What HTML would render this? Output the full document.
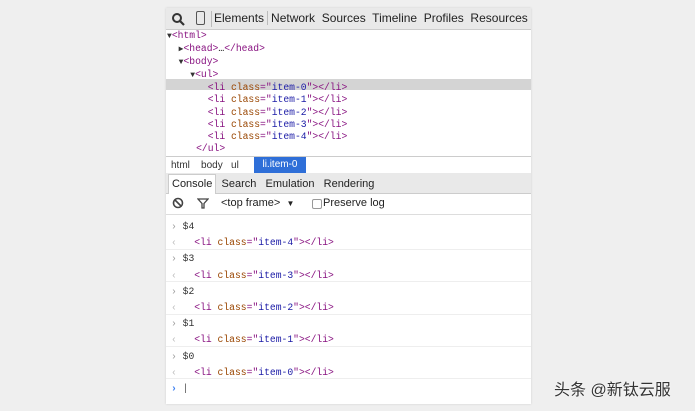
<!DOCTYPE html><html><head><style>
body{margin:0;width:695px;height:411px;background:#efefef;position:relative;overflow:hidden;font-family:"Liberation Sans",sans-serif}
.p{position:absolute;left:166px;top:8px;width:365px;height:396px;background:#fff;box-shadow:0 0 2px #ccc}
.a{position:absolute;white-space:nowrap}
.m{font-family:"Liberation Mono",monospace;font-size:9.7px}
.t{color:#881280}.at{color:#994500}.v{color:#1a1aa6}
.tb{position:absolute;left:0;width:365px}
.sep{position:absolute;left:0;width:365px;height:1px;background:#eee}
.tr{font-size:8px;color:#333}
</style></head><body>
<div class="p">
<div class="tb" style="top:0;height:21px;background:#e9e9e9;border-bottom:1px solid #ccc"></div>
<svg class="a" style="left:5px;top:4px" width="14" height="14"><circle cx="6" cy="6" r="4" fill="none" stroke="#333" stroke-width="2"/><path d="M9 9l4 4" stroke="#333" stroke-width="2.2"/></svg>
<div class="a" style="left:30px;top:3px;width:7px;height:12px;border:1.5px solid #555;border-radius:2px"></div>
<div class="a" style="left:45px;top:3px;height:16px;border-left:1px solid #bbb"></div>
<div class="a" style="left:48px;top:3px;font-size:12px;color:#222;word-spacing:0">Elements<span style="border-left:1px solid #bbb;margin:0 3px"></span>Network&nbsp; Sources&nbsp; Timeline&nbsp; Profiles&nbsp; Resources</div>
<div class="tb" style="top:71px;height:11px;background:#d4d4d4"></div>
<div class="a m" style="left:1px;top:22px;line-height:12.1px">
<div><span class="tr">▼</span><span class="t">&lt;html&gt;</span></div>
<div>&nbsp;&nbsp;<span class="tr">▶</span><span class="t">&lt;head&gt;</span>…<span class="t">&lt;/head&gt;</span></div>
<div>&nbsp;&nbsp;<span class="tr">▼</span><span class="t">&lt;body&gt;</span></div>
<div>&nbsp;&nbsp;&nbsp;&nbsp;<span class="tr">▼</span><span class="t">&lt;ul&gt;</span></div>
<div>&nbsp;&nbsp;&nbsp;&nbsp;&nbsp;&nbsp;&nbsp;<span class="t">&lt;li </span><span class="at">class</span><span class="t">="</span><span class="v">item-0</span><span class="t">"&gt;&lt;/li&gt;</span></div>
<div>&nbsp;&nbsp;&nbsp;&nbsp;&nbsp;&nbsp;&nbsp;<span class="t">&lt;li </span><span class="at">class</span><span class="t">="</span><span class="v">item-1</span><span class="t">"&gt;&lt;/li&gt;</span></div>
<div>&nbsp;&nbsp;&nbsp;&nbsp;&nbsp;&nbsp;&nbsp;<span class="t">&lt;li </span><span class="at">class</span><span class="t">="</span><span class="v">item-2</span><span class="t">"&gt;&lt;/li&gt;</span></div>
<div>&nbsp;&nbsp;&nbsp;&nbsp;&nbsp;&nbsp;&nbsp;<span class="t">&lt;li </span><span class="at">class</span><span class="t">="</span><span class="v">item-3</span><span class="t">"&gt;&lt;/li&gt;</span></div>
<div>&nbsp;&nbsp;&nbsp;&nbsp;&nbsp;&nbsp;&nbsp;<span class="t">&lt;li </span><span class="at">class</span><span class="t">="</span><span class="v">item-4</span><span class="t">"&gt;&lt;/li&gt;</span></div>
<div>&nbsp;&nbsp;&nbsp;&nbsp;&nbsp;<span class="t">&lt;/ul&gt;</span></div>
</div>
<div class="tb" style="top:148px;height:16px;background:#fff;border-top:1px solid #ccc;border-bottom:1px solid #ccc"></div>
<div class="a" style="left:5px;top:152px;font-size:10px;color:#333">html&nbsp;&nbsp;&nbsp; body&nbsp;&nbsp; ul</div>
<div class="a" style="left:88px;top:149px;width:52px;height:16px;background:#2f6fd8;color:#fff;font-size:10px;line-height:16px;text-align:center">li.item-0</div>
<div class="tb" style="top:165px;height:20px;background:#e9e9e9;border-bottom:1px solid #ccc"></div>
<div class="a" style="left:2px;top:166px;width:46px;height:19px;background:#fff;border:1px solid #ccc;border-bottom:none"></div>
<div class="a" style="left:6px;top:170px;font-size:11px;color:#222">Console&nbsp;&nbsp; Search&nbsp;&nbsp; Emulation&nbsp;&nbsp; Rendering</div>
<div class="tb" style="top:186px;height:20px;border-bottom:1px solid #ddd"></div>
<svg class="a" style="left:6px;top:189px" width="12" height="12"><circle cx="6" cy="6" r="4.5" fill="none" stroke="#444" stroke-width="1.6"/><path d="M3 3l6 6" stroke="#444" stroke-width="1.6"/></svg>
<svg class="a" style="left:31px;top:190px" width="12" height="11"><path d="M1 1h10L7 5.5V10H5V5.5z" fill="none" stroke="#444" stroke-width="1.3"/></svg>
<div class="a" style="left:55px;top:189px;font-size:11px;color:#222">&lt;top frame&gt;&nbsp; <span style="font-size:8px">▼</span></div>
<div class="a" style="left:146px;top:191px;width:8px;height:8px;border:1px solid #999;border-radius:2px"></div>
<div class="a" style="left:157px;top:189px;font-size:11px;color:#222">Preserve log</div>
<div class="a m" style="left:5px;top:211px;line-height:16.2px">
<div><span style="color:#999">›</span> <span style="color:#333">$4</span></div>
<div><span style="color:#bbb">‹</span>&nbsp;&nbsp; <span class="t">&lt;li </span><span class="at">class</span><span class="t">="</span><span class="v">item-4</span><span class="t">"&gt;&lt;/li&gt;</span></div>
<div><span style="color:#999">›</span> <span style="color:#333">$3</span></div>
<div><span style="color:#bbb">‹</span>&nbsp;&nbsp; <span class="t">&lt;li </span><span class="at">class</span><span class="t">="</span><span class="v">item-3</span><span class="t">"&gt;&lt;/li&gt;</span></div>
<div><span style="color:#999">›</span> <span style="color:#333">$2</span></div>
<div><span style="color:#bbb">‹</span>&nbsp;&nbsp; <span class="t">&lt;li </span><span class="at">class</span><span class="t">="</span><span class="v">item-2</span><span class="t">"&gt;&lt;/li&gt;</span></div>
<div><span style="color:#999">›</span> <span style="color:#333">$1</span></div>
<div><span style="color:#bbb">‹</span>&nbsp;&nbsp; <span class="t">&lt;li </span><span class="at">class</span><span class="t">="</span><span class="v">item-1</span><span class="t">"&gt;&lt;/li&gt;</span></div>
<div><span style="color:#999">›</span> <span style="color:#333">$0</span></div>
<div><span style="color:#bbb">‹</span>&nbsp;&nbsp; <span class="t">&lt;li </span><span class="at">class</span><span class="t">="</span><span class="v">item-0</span><span class="t">"&gt;&lt;/li&gt;</span></div>
<div><span style="color:#367cf1;font-weight:bold">›</span> <span style="color:#555">|</span></div>
</div>
<div class="sep" style="top:241px"></div><div class="sep" style="top:273px"></div><div class="sep" style="top:306px"></div><div class="sep" style="top:338px"></div><div class="sep" style="top:370px"></div>
</div>
<div class="a" style="left:554px;top:376px;font-size:16px;color:#333;text-shadow:0 0 2px #fff;font-family:'Liberation Sans','Noto Sans CJK SC',sans-serif">头条 @新钛云服</div>
</body></html>
